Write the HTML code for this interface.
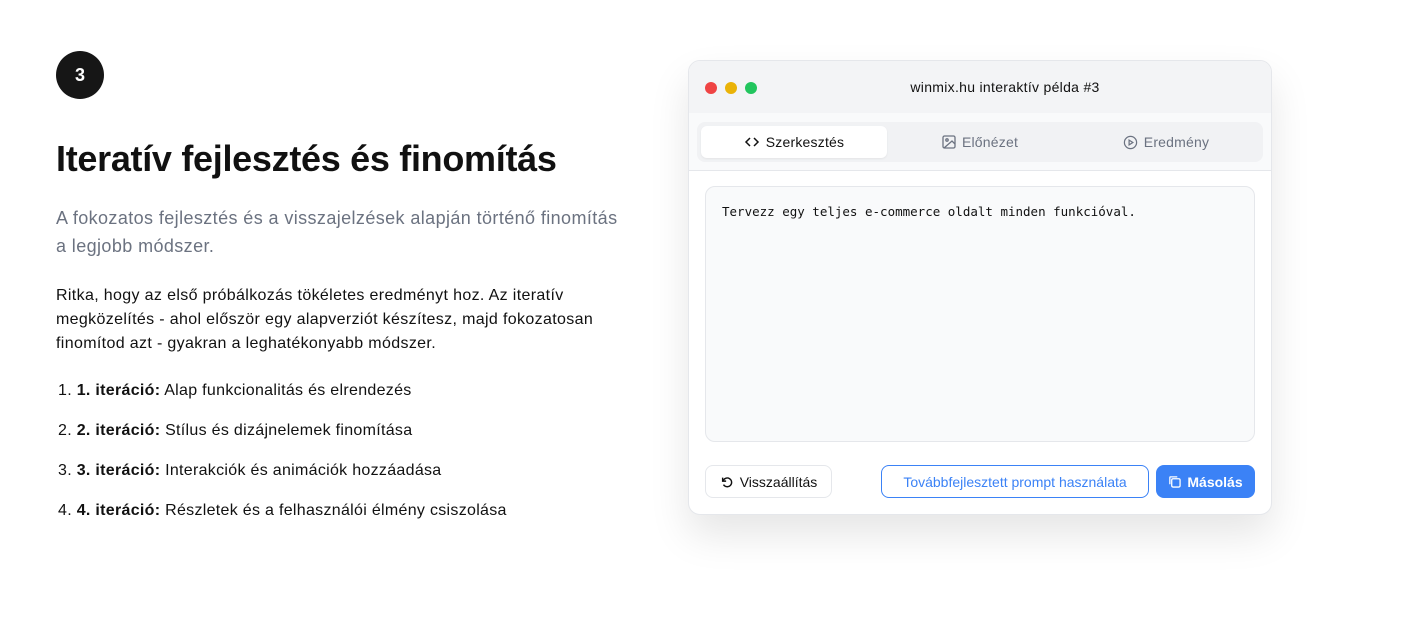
<!DOCTYPE html>
<html><head><meta charset="utf-8"><style>
*{box-sizing:border-box;margin:0;padding:0}
body{width:1425px;height:635px;background:#fff;font-family:"Liberation Sans",sans-serif;color:#111;position:relative;overflow:hidden}
.badge{position:absolute;left:56px;top:51px;width:48px;height:48px;border-radius:50%;background:#161616;color:#fff;font-weight:bold;font-size:18px;display:flex;align-items:center;justify-content:center}
h1{position:absolute;left:56px;top:138px;font-size:36px;font-weight:bold;letter-spacing:-0.3px;color:#111}
.sub{position:absolute;left:56px;top:204px;width:575px;font-size:18px;line-height:28px;color:#6b7280;letter-spacing:0.4px}
.p{position:absolute;left:56px;top:284px;width:580px;font-size:16px;line-height:24px;color:#111;letter-spacing:0.35px}
ol{position:absolute;left:58px;top:379px;font-size:16px;list-style:none;letter-spacing:0.3px}
ol li{height:40px;line-height:24px}
.win{position:absolute;left:688px;top:60px;width:584px;height:455px;border:1px solid #e5e7eb;border-radius:12px;background:#fff;box-shadow:0 20px 40px rgba(0,0,0,.1);overflow:hidden}
.bar{height:52px;background:#f3f4f6;position:relative}
.dot{position:absolute;top:21px;width:12px;height:12px;border-radius:50%}
.title{position:absolute;left:50px;right:0;top:18px;text-align:center;font-size:14px;color:#111;letter-spacing:0.3px}
.tabsw{height:58px;background:#f9fafb;border-bottom:1px solid #e5e7eb;padding:9px 8px}
.tabs{height:40px;background:#f1f2f4;border-radius:8px;display:flex;padding:4px}
.tab{flex:1;display:flex;align-items:center;justify-content:center;font-size:14px;color:#6b7280;gap:6px;letter-spacing:0.2px}
.tab.a{background:#fff;color:#111;border-radius:6px;box-shadow:0 1px 2px rgba(0,0,0,.06)}
.ta{position:absolute;left:16px;top:125px;width:550px;height:256px;border:1px solid #e5e7eb;border-radius:10px;background:#f9fafb;padding:17px 16px;font-family:"DejaVu Sans Mono",monospace;font-size:12.5px}
.btn{position:absolute;top:404px;height:33px;border-radius:8px;font-size:14px;display:flex;align-items:center;justify-content:center;gap:6px}
</style></head><body>
<div class="badge">3</div>
<h1>Iteratív fejlesztés és finomítás</h1>
<div class="sub">A fokozatos fejlesztés és a visszajelzések alapján történő finomítás<br>a legjobb módszer.</div>
<div class="p">Ritka, hogy az első próbálkozás tökéletes eredményt hoz. Az iteratív megközelítés - ahol először egy alapverziót készítesz, majd fokozatosan finomítod azt - gyakran a leghatékonyabb módszer.</div>
<ol>
<li>1. <b>1. iteráció:</b> Alap funkcionalitás és elrendezés</li>
<li>2. <b>2. iteráció:</b> Stílus és dizájnelemek finomítása</li>
<li>3. <b>3. iteráció:</b> Interakciók és animációk hozzáadása</li>
<li>4. <b>4. iteráció:</b> Részletek és a felhasználói élmény csiszolása</li>
</ol>
<div class="win">
<div class="bar"><span class="dot" style="left:16px;background:#ef4444"></span><span class="dot" style="left:36px;background:#eab308"></span><span class="dot" style="left:56px;background:#22c55e"></span><div class="title">winmix.hu interaktív példa #3</div></div>
<div class="tabsw"><div class="tabs">
<div class="tab a"><svg width="16" height="16" viewBox="0 0 16 16" fill="none" stroke="#111" stroke-width="1.5"><path d="M6 4L2 8l4 4M10 4l4 4-4 4"/></svg>Szerkesztés</div>
<div class="tab"><svg width="14" height="14" viewBox="0 0 14 14" fill="none" stroke="#6b7280" stroke-width="1.3"><rect x="1" y="1" width="12" height="12" rx="1.5"/><circle cx="5" cy="5" r="1.2"/><path d="M13 9l-3-3-8 7"/></svg>Előnézet</div>
<div class="tab"><svg width="15" height="15" viewBox="0 0 16 16" fill="none" stroke="#6b7280" stroke-width="1.3"><circle cx="8" cy="8" r="6.5"/><path d="M6.5 5.5l4 2.5-4 2.5z"/></svg>Eredmény</div>
</div></div>
<div class="ta">Tervezz egy teljes e-commerce oldalt minden funkcióval.</div>
<div class="btn" style="left:16px;width:127px;border:1px solid #e5e7eb;color:#111"><svg width="14" height="14" viewBox="0 0 16 16" fill="none" stroke="#111" stroke-width="1.6"><path d="M3 3v4h4"/><path d="M3.5 7A5 5 0 1 1 4 11"/></svg>Visszaállítás</div>
<div class="btn" style="left:192px;width:268px;border:1px solid #3b82f6;color:#3b82f6">Továbbfejlesztett prompt használata</div>
<div class="btn" style="left:467px;width:99px;background:#3b82f6;color:#fff;font-weight:bold"><svg width="13" height="13" viewBox="0 0 14 14" fill="none" stroke="#fff" stroke-width="1.4"><rect x="4" y="4" width="9" height="9" rx="1.5"/><path d="M2 10V2.5A.5.5 0 0 1 2.5 2H10"/></svg>Másolás</div>
</div>
</body></html>
